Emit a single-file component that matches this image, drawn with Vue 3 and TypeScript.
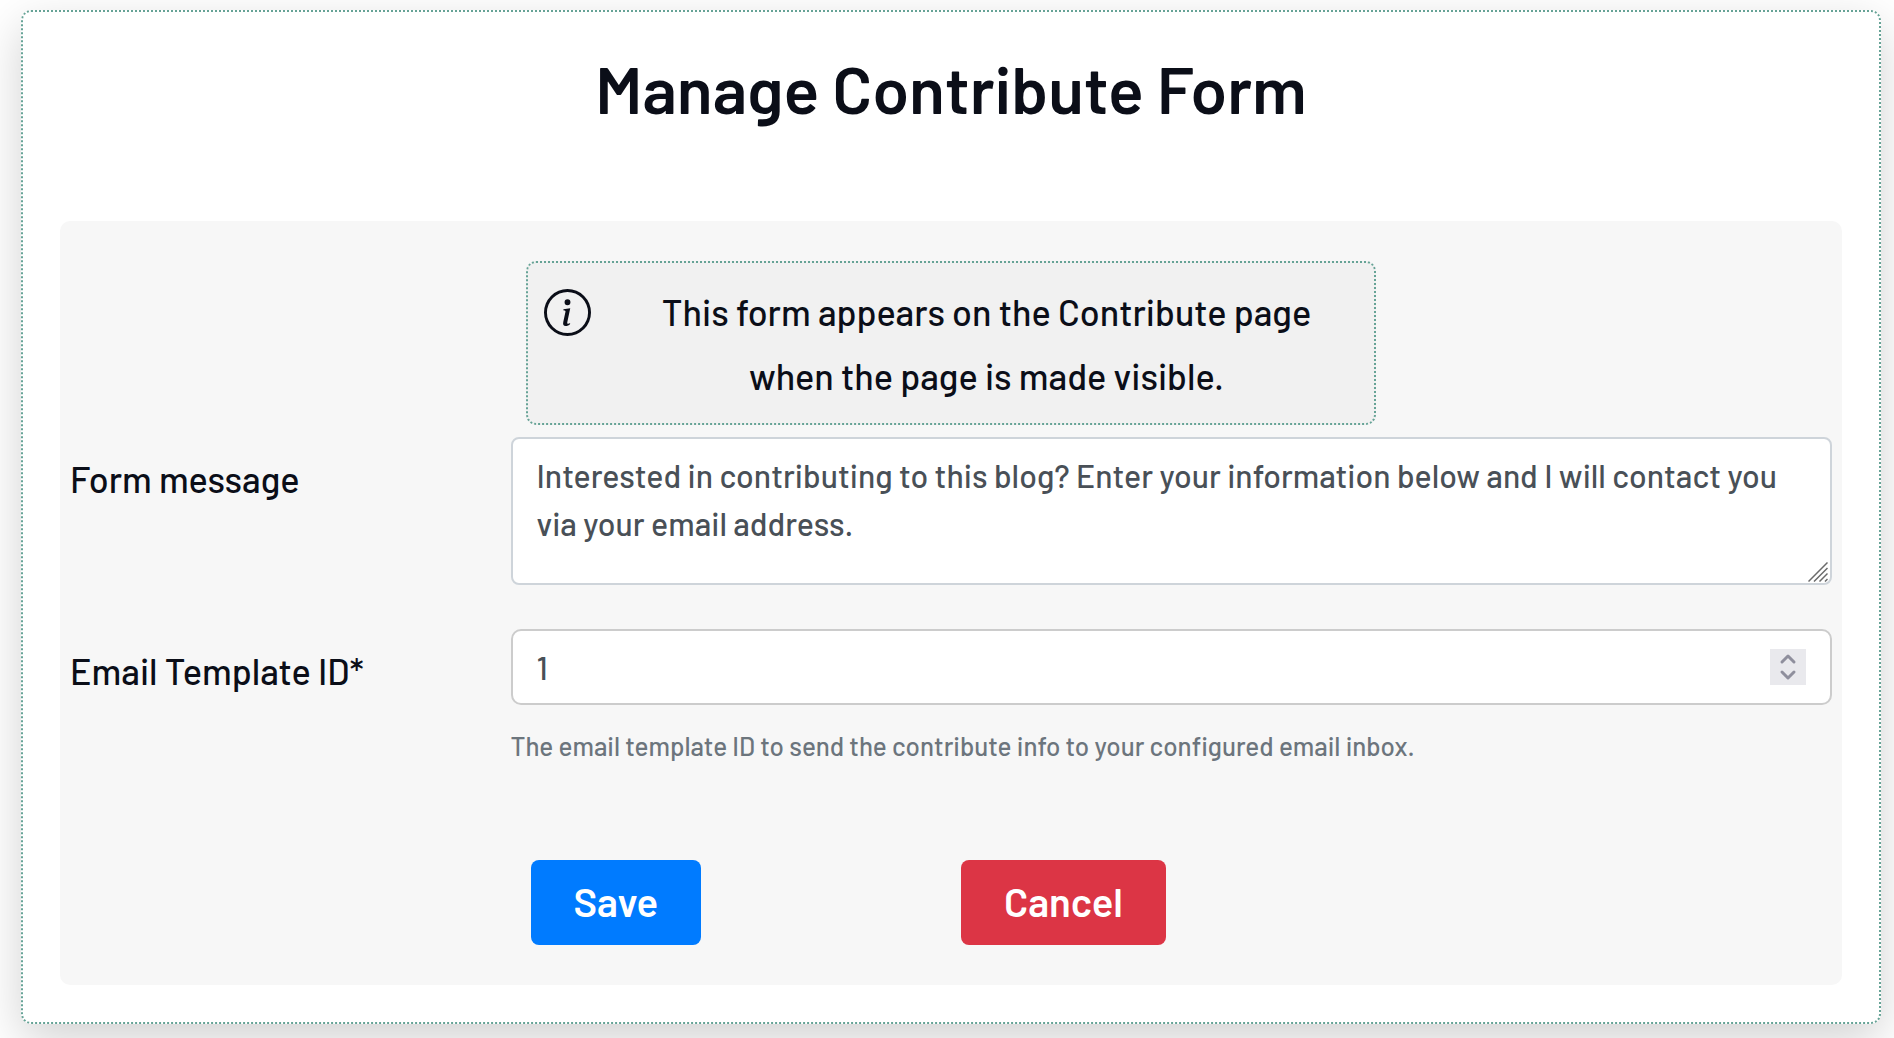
<script setup lang="ts">
import { ref } from 'vue'

const message = ref<string>(
  'Interested in contributing to this blog? Enter your information below and I will contact you via your email address.'
)
const templateId = ref<number>(1)

function step(amount: number): void {
  templateId.value = Number(templateId.value) + amount
}
</script>

<template>
  <main class="card">
    <h1 class="title">Manage Contribute Form</h1>

    <form class="panel" @submit.prevent>
      <div class="notice">
        <svg class="notice-icon" viewBox="0 0 16 16" fill="currentColor" aria-hidden="true">
          <path d="M8 15A7 7 0 1 1 8 1a7 7 0 0 1 0 14m0 1A8 8 0 1 0 8 0a8 8 0 0 0 0 16" />
          <path
            d="m8.930 6.588-2.290.287-.082.380.450.083c.294.070.352.176.288.469l-.738 3.468c-.194.897.105 1.319.808 1.319.545 0 1.178-.252 1.465-.598l.088-.416c-.200.176-.492.246-.686.246-.275 0-.375-.193-.304-.533zM9 4.500a1 1 0 1 1-2 0 1 1 0 0 1 2 0"
          />
        </svg>
        <p class="notice-text">This form appears on the Contribute page when the page is made visible.</p>
      </div>

      <div class="row">
        <label class="label" for="message">Form message</label>
        <div class="field">
          <textarea id="message" v-model="message" class="control area"></textarea>
          <svg class="grip" viewBox="0 0 20 20" aria-hidden="true">
            <path d="M0.500 19.500 19.500 0.500M6 19.500 19.500 6M11.500 19.500l8-8M17 19.500l2.500-2.500" />
          </svg>
        </div>
      </div>

      <div class="row">
        <label class="label" for="template">Email Template ID*</label>
        <div class="field">
          <input
            id="template"
            v-model="templateId"
            class="control number"
            type="number"
            required
            aria-describedby="template-help"
          />
          <div class="stepper">
            <button type="button" aria-label="Increase" @click="step(1)">
              <svg viewBox="0 0 36 18" aria-hidden="true"><path d="M12 13l6-6 6 6" /></svg>
            </button>
            <button type="button" aria-label="Decrease" @click="step(-1)">
              <svg viewBox="0 0 36 18" aria-hidden="true"><path d="M12 5l6 6 6-6" /></svg>
            </button>
          </div>
        </div>
      </div>

      <p id="template-help" class="help">
        The email template ID to send the contribute info to your configured email inbox.
      </p>

      <div class="actions">
        <div><button class="btn save" type="submit">Save</button></div>
        <div><button class="btn cancel" type="button">Cancel</button></div>
      </div>
    </form>
  </main>
</template>

<style>
body {
  background: #fff;
}
</style>

<style scoped>
* {
  box-sizing: border-box;
}

.card {
  margin: 10px 13px 14px 21px;
  padding: 28px 37px 37px;
  border: 2px dotted #66a396;
  border-radius: 10px;
  background: #fff;
  box-shadow: 0 16px 48px rgba(0, 0, 0, 0.18);
  color: #0b0e18;
  font-family: Barlow, Roboto, sans-serif;
  font-weight: 500;
}

.title {
  margin: 0 0 85px;
  font-size: 66px;
  line-height: 96px;
  font-weight: 600;
  text-align: center;
}

.panel {
  padding: 40px 10px;
  border-radius: 10px;
  background: #f7f7f7;
}

.notice {
  display: flex;
  align-items: flex-start;
  width: 850px;
  max-width: 100%;
  margin: 0 auto 12px;
  padding: 16px 16px 14px;
  border: 2px dotted #66a396;
  border-radius: 10px;
  background: #f1f1f1;
}

.notice-icon {
  flex: none;
  width: 47px;
  height: 47px;
  margin-top: 10px;
}

.notice-text {
  flex: 1;
  margin: 1px 0;
  padding: 0 24px 0 48px;
  font-size: 36px;
  line-height: 64px;
  text-align: center;
}

.row {
  display: flex;
  align-items: flex-start;
  margin-bottom: 44px;
}

.label {
  width: 25%;
  padding-top: 15px;
  font-size: 36px;
  line-height: 54px;
}

.field {
  position: relative;
  width: 75%;
}

.control {
  display: block;
  width: 100%;
  margin: 0;
  padding: 12px 24px;
  background: #fff;
  color: #495057;
  font-family: inherit;
  font-size: 32px;
  font-weight: inherit;
  line-height: 48px;
  outline: none;
}

.area {
  height: 148px;
  border: 2px solid #ced4da;
  border-radius: 8px;
  overflow: hidden;
  resize: none;
}

.number {
  height: 76px;
  border: 2px solid #ccc;
  border-radius: 10px;
  appearance: textfield;
}

.number::-webkit-inner-spin-button {
  appearance: none;
  margin: 0;
}

.grip {
  position: absolute;
  right: 4px;
  bottom: 3px;
  width: 20px;
  height: 20px;
  fill: none;
  stroke: #6b6b6b;
  stroke-width: 1.5;
  pointer-events: none;
}

.stepper {
  position: absolute;
  top: 20px;
  right: 26px;
  display: flex;
  flex-direction: column;
  width: 36px;
  background: #e9e9ed;
}

.stepper button {
  height: 18px;
  padding: 0;
  border: 0;
  background: none;
}

.stepper svg {
  display: block;
  width: 36px;
  height: 18px;
  fill: none;
  stroke: #8f8f9d;
  stroke-width: 3;
  stroke-linecap: round;
  stroke-linejoin: round;
}

.help {
  margin: -22px 0 95px 25%;
  color: #6c757d;
  font-size: 26px;
  line-height: 38px;
}

.actions {
  display: grid;
  grid-template-columns: repeat(3, 1fr);
  margin-left: 25%;
  padding: 0 10px 0 20px;
}

.btn {
  display: block;
  height: 85px;
  padding: 0 43px 4px;
  border: 0;
  border-radius: 8px;
  color: #fff;
  font-family: inherit;
  font-size: 40px;
  line-height: 60px;
  font-weight: 600;
}

.save {
  background: #007bff;
}

.cancel {
  background: #dc3545;
}
</style>
